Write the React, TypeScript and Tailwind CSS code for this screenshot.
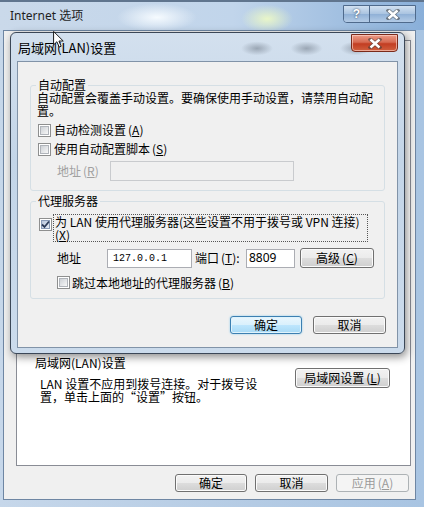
import type { ReactNode } from "react";

// Win7 "Internet 选项" window with the LAN settings dialog lying over it.

const cjk = "font-['Noto_Sans_CJK_SC','Noto_Sans',sans-serif]";

function Key({ k }: { k: string }) {
  return (
    <span className="ml-[2px]">
      (<span className="underline underline-offset-1">{k}</span>)
    </span>
  );
}

function Check({ checked = false }: { checked?: boolean }) {
  return (
    <span className="relative flex h-[13px] w-[13px] shrink-0 border border-[#8e8f8f] bg-white p-[1px]">
      <span
        className={
          checked
            ? "flex-1 border border-[#8a9bb8] bg-[linear-gradient(135deg,#b9c6dc,#e6ecf5)]"
            : "flex-1 border border-[#b0b4ba] bg-[linear-gradient(135deg,#cdd1d6,#f7f7f7)]"
        }
      />
      {checked && (
        <svg className="absolute left-0 top-0" width="11" height="11" viewBox="0 0 11 11">
          <path d="M2 5.5 L4.5 8 L9 2.5" fill="none" stroke="#2b3a58" strokeWidth="1.8" />
        </svg>
      )}
    </span>
  );
}

function Btn({
  children,
  className = "",
  primary = false,
  disabled = false,
}: {
  children: ReactNode;
  className?: string;
  primary?: boolean;
  disabled?: boolean;
}) {
  const skin = disabled
    ? "border-[#adb2b5] bg-[#f4f4f4] text-[#9a9a9a]"
    : primary
      ? "border-[#3c7fb1] bg-[linear-gradient(#eaf6fd_0%,#d9f0fc_50%,#bee6fd_50%,#a7d9f5_100%)] shadow-[inset_0_0_0_1px_#dff3fc,0_0_2px_#7ec4ea]"
      : "border-[#707070] bg-[linear-gradient(#f2f2f2_0%,#ebebeb_50%,#dddddd_50%,#cfcfcf_100%)] shadow-[inset_0_0_0_1px_#fbfbfb]";
  return (
    <div
      className={`flex shrink-0 items-center justify-center rounded-[3px] border text-[12px] leading-none ${skin} ${className}`}
    >
      {children}
    </div>
  );
}

function CloseGlyph() {
  return (
    <svg width="14" height="11" viewBox="0 0 14 11">
      <path d="M2.5 1.5 L11.5 9.5 M11.5 1.5 L2.5 9.5" stroke="#3b3b3b" strokeWidth="4" strokeLinecap="square" opacity="0.55" />
      <path d="M2.5 1.5 L11.5 9.5 M11.5 1.5 L2.5 9.5" stroke="#ffffff" strokeWidth="2.4" />
    </svg>
  );
}

function LanDialog() {
  return (
    <div className="absolute left-[10px] top-[32px] flex h-[322px] w-[395px] flex-col rounded-[6px] border border-[#3b4757] bg-[linear-gradient(180deg,#d3e0ee,#c3d5e8_40%,#cbdbec)] px-[6px] pb-[5px] shadow-[2px_3px_8px_rgba(0,0,0,0.45)]">
      <div className="relative flex h-[28px] shrink-0 items-center bg-[radial-gradient(ellipse_16px_7px_at_63%_55%,#9aa6b4,transparent),radial-gradient(ellipse_16px_7px_at_76%_55%,#9aa6b4,transparent),radial-gradient(ellipse_16px_7px_at_89%_55%,#9aa6b4,transparent)] pl-[1px]">
        <span className={`${cjk} text-[13px] leading-none text-black`}>局域网(LAN)设置</span>
        <div className="absolute right-[0px] top-[1px] flex h-[18px] w-[47px] items-center justify-center rounded-b-[4px] border border-[#7a2a1a] bg-[linear-gradient(#ec9c88_0%,#d66a52_45%,#c23d22_55%,#d0603f_100%)] shadow-[inset_0_0_0_1px_rgba(255,220,210,0.6)]">
          <CloseGlyph />
        </div>
      </div>

      <div className={`${cjk} flex flex-1 flex-col border border-[#8193a8] bg-[#f0f0f0] text-[12px] text-black`}>
        <fieldset className="ml-[12px] mt-[17px] w-[355px] rounded-[3px] border border-[#d5dfe5] pb-[9px]">
          <legend className="ml-[5px] px-[2px] leading-[12px]">自动配置</legend>
          <p className="ml-[6px] whitespace-nowrap leading-[13px]">
            自动配置会覆盖手动设置。要确保使用手动设置，请禁用自动配
            <br />
            置。
          </p>
          <div className="ml-[7px] mt-[6px] flex h-[14px] items-center">
            <Check />
            <span className="ml-[3px] leading-none">
              自动检测设置<Key k="A" />
            </span>
          </div>
          <div className="ml-[7px] mt-[5px] flex h-[14px] items-center">
            <Check />
            <span className="ml-[3px] leading-none">
              使用自动配置脚本<Key k="S" />
            </span>
          </div>
          <div className="ml-[26px] mt-[5px] flex h-[20px] items-center">
            <span className="w-[53px] leading-none text-[#a0a0a0]">
              地址<Key k="R" />
            </span>
            <div className="h-[20px] w-[184px] border border-[#c9cbce] bg-[#f0f0f0]" />
          </div>
        </fieldset>

        <fieldset className="ml-[12px] mt-[4px] w-[355px] rounded-[3px] border border-[#d5dfe5] pb-[9px]">
          <legend className="ml-[5px] px-[2px] leading-[12px]">代理服务器</legend>
          <div className="ml-[8px] mt-[7px] flex items-start">
            <span className="mt-[4px]">
              <Check checked />
            </span>
            <div className="ml-[1px] w-[315px] whitespace-nowrap border border-dotted border-[#555] pl-[1px] leading-[13px]">
              为 LAN 使用代理服务器(这些设置不用于拨号或 VPN 连接)
              <br />
              <span className="-ml-[2px]">
                <Key k="X" />
              </span>
            </div>
          </div>
          <div className="ml-[26px] mt-[6px] flex h-[20px] items-center">
            <span className="w-[50px] leading-none">地址</span>
            <div className="flex h-[19px] w-[85px] items-center border border-[#abadb3] bg-white pl-[5px] font-['Liberation_Mono',monospace] text-[10px]">
              127.0.0.1
            </div>
            <span className="ml-[3px] w-[51px] whitespace-nowrap leading-none">
              端口<Key k="T" />:
            </span>
            <div className="flex h-[19px] w-[49px] items-center border border-[#abadb3] bg-white pl-[2px] font-['Noto_Sans',sans-serif] text-[12px]">
              8809
            </div>
            <Btn className="ml-[5px] h-[20px] w-[74px]">
              高级<Key k="C" />
            </Btn>
          </div>
          <div className="ml-[26px] mt-[8px] flex h-[13px] items-center">
            <Check />
            <span className="ml-[2px] leading-none">
              跳过本地地址的代理服务器<Key k="B" />
            </span>
          </div>
        </fieldset>

        <div className="mr-[11px] mt-[17px] flex justify-end gap-[11px]">
          <Btn primary className="h-[18px] w-[72px]">
            确定
          </Btn>
          <Btn className="h-[18px] w-[73px]">取消</Btn>
        </div>
      </div>
    </div>
  );
}

function Cursor() {
  return (
    <svg className="absolute left-[53px] top-[31px]" width="11" height="17" viewBox="0 0 12 19">
      <path d="M0.5 0.5 L0.5 15.5 L4.2 12 L6.8 18 L9 17 L6.5 11.2 L11.3 11.2 Z" fill="#ffffff" stroke="#000" strokeWidth="1" />
    </svg>
  );
}

export default function App() {
  return (
    <div className="relative h-[507px] w-[424px] overflow-hidden bg-[linear-gradient(90deg,#c6d7ea,#b4cbe4_60%,#a8c4e2)]">
      <div className="flex h-full flex-col">
        <div className="relative flex h-[30px] shrink-0 items-center border-t-[2px] border-[#60758e] bg-[radial-gradient(ellipse_40px_14px_at_37%_55%,#f6fbff,transparent),radial-gradient(ellipse_26px_14px_at_63%_60%,#e9f6c8,transparent),linear-gradient(90deg,#cad9ea,#c1d5eb_55%,#89afd9)] pl-[10px]">
          <span className="font-['Noto_Sans','Noto_Sans_CJK_SC',sans-serif] text-[12px] leading-none text-[#1e1e1e]">
            Internet 选项
          </span>
          <div className="absolute right-[8px] top-[3px] flex h-[18px] overflow-hidden rounded-b-[4px] border border-[#4f6a8c] shadow-[inset_0_0_0_1px_rgba(255,255,255,0.5)]">
            <div className="flex w-[26px] items-center justify-center border-r border-[#4f6a8c] bg-[linear-gradient(#d2e1f1,#a9c3e0_50%,#8fb0d6_50%,#b3cbe6)] font-['Liberation_Sans',sans-serif] text-[12px] font-bold leading-none text-white [text-shadow:0_0_2px_#1f2f45]">
              ?
            </div>
            <div className="flex w-[45px] items-center justify-center bg-[linear-gradient(#d2e1f1,#a9c3e0_50%,#8fb0d6_50%,#b3cbe6)]">
              <CloseGlyph />
            </div>
          </div>
        </div>

        <div className="flex flex-1 pb-[7px] pl-[3px] pr-[8px]">
          <div className={`${cjk} flex flex-1 flex-col border border-[#6e86a3] bg-[#f0f0f0] text-[12px] text-black`}>
            <div className="ml-[12px] mt-[9px] flex h-[426px] w-[395px] flex-col border border-[#898c95] bg-white">
              <div className="ml-[18px] mt-[317px] leading-[10px]">局域网(LAN)设置</div>
              <div className="flex">
                <p className="ml-[23px] mt-[9px] whitespace-nowrap leading-[13px]">
                  LAN 设置不应用到拨号连接。对于拨号设
                  <br />
                  置，单击上面的“设置”按钮。
                </p>
                <Btn className="ml-auto mr-[20px] h-[20px] w-[95px]">
                  局域网设置<Key k="L" />
                </Btn>
              </div>
            </div>
            <div className="mr-[6px] mt-[8px] flex justify-end gap-[8px]">
              <Btn className="h-[18px] w-[72px]">确定</Btn>
              <Btn className="h-[18px] w-[73px]">取消</Btn>
              <Btn disabled className="h-[18px] w-[73px]">
                应用<Key k="A" />
              </Btn>
            </div>
          </div>
        </div>
      </div>

      <LanDialog />
      <Cursor />
    </div>
  );
}
